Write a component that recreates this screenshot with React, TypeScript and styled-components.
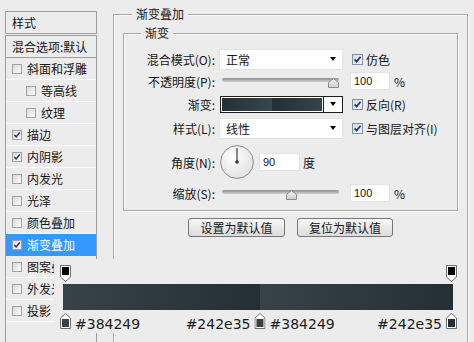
import React from "react";
import styled, { createGlobalStyle } from "styled-components";

const GlobalStyle = createGlobalStyle`
  html, body {
    margin: 0;
    padding: 0;
    overflow: hidden;
    background: #ececec;
  }
  body {
    font-family: "Noto Sans CJK SC", "Noto Sans", sans-serif;
    font-size: 12px;
    color: #161616;
  }
`;

const Window = styled.div`
  position: relative;
  width: 474px;
  height: 342px;
  overflow: hidden;
  display: flex;
  align-items: flex-start;
`;

/* ---------- style list on the left ---------- */

const Sidebar = styled.div`
  margin: 11px 0 0 5px;
  width: 92px;
  height: 345px;
  display: flex;
  flex-direction: column;
`;

const SideHeader = styled.div`
  height: 23px;
  box-sizing: border-box;
  border: 1px solid #9e9e9e;
  padding-left: 6px;
  line-height: 21px;
`;

const SideList = styled.div`
  margin-top: 1px;
  flex: 1;
  border: 1px solid #9e9e9e;
  display: flex;
  flex-direction: column;
`;

const BlendItem = styled.div`
  height: 22px;
  box-sizing: border-box;
  border-bottom: 1px solid #9e9e9e;
  padding-left: 6px;
  line-height: 21px;
  white-space: nowrap;
`;

const LayerItem = styled.div<{ $indent?: boolean; $active?: boolean }>`
  height: 22px;
  box-sizing: border-box;
  border-bottom: 1px solid ${(p) => (p.$active ? "#3399ff" : "#fbfbfb")};
  display: flex;
  align-items: center;
  gap: 5px;
  padding-left: ${(p) => (p.$indent ? 20 : 6)}px;
  background: ${(p) => (p.$active ? "#3399ff" : "transparent")};
  color: ${(p) => (p.$active ? "#fff" : "inherit")};
  white-space: nowrap;
  overflow: hidden;
`;

const Box = styled.span<{ $size: number; $blue?: boolean }>`
  flex: none;
  width: ${(p) => p.$size}px;
  height: ${(p) => p.$size}px;
  box-sizing: border-box;
  border: 1px solid ${(p) => (p.$blue ? "#7f91ab" : "#a2a2a2")};
  background: ${(p) =>
    p.$blue
      ? "linear-gradient(135deg, #d3dae5, #f7f8fa)"
      : "linear-gradient(135deg, #d9d9d9, #fbfbfb)"};
  display: flex;
  align-items: center;
  justify-content: center;

  svg {
    display: block;
  }
`;

const Check = ({ size, checked, blue }: { size: number; checked?: boolean; blue?: boolean }) => (
  <Box $size={size} $blue={blue}>
    {checked && (
      <svg width={size - 2} height={size - 2} viewBox="0 0 9 9">
        <path d="M1.6 4.4 L3.6 6.6 L7.6 1.8" fill="none" stroke="#22386a" strokeWidth="1.7" />
      </svg>
    )}
  </Box>
);

/* ---------- right panel ---------- */

const Main = styled.div`
  margin: 14px 0 0 16px;
  width: 355px;
  height: 360px;
  box-sizing: border-box;
  border: 1px solid #a8a8a8;
  box-shadow: inset 1px 1px 0 #fafafa, 1px 1px 0 #fafafa;
  padding: 0 9px;
  display: flex;
  flex-direction: column;
`;

const GroupTitle = styled.div<{ $indent: number }>`
  margin: -9px 0 0 ${(p) => p.$indent}px;
  padding: 0 4px;
  align-self: flex-start;
  background: #ececec;
  line-height: 16px;
`;

const Group = styled.div`
  margin-top: 11px;
  height: 178px;
  box-sizing: border-box;
  border: 1px solid #a8a8a8;
  box-shadow: inset 1px 1px 0 #fafafa, 1px 1px 0 #fafafa;
  display: flex;
  flex-direction: column;
`;

const Row = styled.div<{ $h: number; $mt?: number }>`
  display: flex;
  align-items: center;
  height: ${(p) => p.$h}px;
  margin-top: ${(p) => p.$mt ?? 0}px;
  white-space: nowrap;
`;

const Label = styled.div`
  width: 95px;
  box-sizing: border-box;
  padding-right: 4px;
  text-align: right;
`;

const Select = styled.div`
  width: 124px;
  height: 21px;
  box-sizing: border-box;
  background: #fff;
  border: 1px solid #e3e3e3;
  display: flex;
  align-items: center;
  justify-content: space-between;
  padding: 0 6px 0 6px;
`;

const Caret = styled.span`
  width: 0;
  height: 0;
  border-left: 3.5px solid transparent;
  border-right: 3.5px solid transparent;
  border-top: 4px solid #000;
`;

const CheckLabel = styled.div`
  margin-left: 9px;
  display: flex;
  align-items: center;
  gap: 3px;
`;

const SliderBox = styled.div`
  position: relative;
  width: 124px;
  height: 14px;
`;

const Track = styled.div`
  margin: 4px 0 0 3px;
  width: 117px;
  height: 4px;
  border-radius: 2px;
  background: linear-gradient(#8c8c8c, #d2d2d2);
`;

const Thumb = styled.svg<{ $pos: number }>`
  position: absolute;
  top: 4px;
  left: ${(p) => 3 + p.$pos * 111 - 5.5}px;
`;

const Slider = ({ pos }: { pos: number }) => (
  <SliderBox>
    <Track />
    <Thumb $pos={pos} width="11" height="10" viewBox="0 0 11 10">
      <defs>
        <linearGradient id="thumbFill" x1="0" y1="0" x2="0" y2="1">
          <stop offset="0" stopColor="#f6f6f6" />
          <stop offset="1" stopColor="#cdcdcd" />
        </linearGradient>
      </defs>
      <path d="M5.5 0.5 L10.5 4.5 V9.5 H0.5 V4.5 Z" fill="url(#thumbFill)" stroke="#8a8a8a" />
    </Thumb>
  </SliderBox>
);

const NumField = styled.div<{ $w: number; $ml: number }>`
  margin-left: ${(p) => p.$ml}px;
  width: ${(p) => p.$w}px;
  height: 18px;
  box-sizing: border-box;
  background: #fff;
  border: 1px solid #e3e3e3;
  padding-left: 3px;
  font-family: "Liberation Sans", Arial, sans-serif;
  font-size: 11px;
  line-height: 16px;
`;

const Unit = styled.span<{ $ml: number }>`
  margin-left: ${(p) => p.$ml}px;
`;

const GradientPicker = styled.div`
  margin-left: 1px;
  width: 123px;
  height: 17px;
  box-sizing: border-box;
  border: 1px solid #1e1e1e;
  background: #fff;
  display: flex;
`;

const GradientPreview = styled.div`
  flex: 1;
  margin: 1px;
  background: linear-gradient(90deg, #242e35 0%, #3a464d 50%, #242e35 50%, #384249 100%);
`;

const GradientButton = styled.div`
  width: 18px;
  border-left: 1px solid #1e1e1e;
  display: flex;
  align-items: center;
  justify-content: center;
`;

const Dial = ({ angle }: { angle: number }) => {
  const r = (angle * Math.PI) / 180;
  return (
    <DialSvg width="34" height="34" viewBox="0 0 34 34">
      <defs>
        <radialGradient id="dialFill" cx="40%" cy="35%" r="75%">
          <stop offset="0" stopColor="#ffffff" />
          <stop offset="1" stopColor="#dedede" />
        </radialGradient>
      </defs>
      <circle cx="17" cy="17" r="16.4" fill="url(#dialFill)" stroke="#8c8c8c" />
      <line
        x1="17"
        y1="17"
        x2={17 + 14 * Math.cos(r)}
        y2={17 - 14 * Math.sin(r)}
        stroke="#595959"
        strokeWidth="1.4"
      />
      <circle cx="17" cy="17" r="1.8" fill="#333" />
    </DialSvg>
  );
};

const DialSvg = styled.svg`
  margin-left: 1px;
  display: block;
`;

const ButtonRow = styled.div`
  margin-top: 7px;
  display: flex;
  justify-content: center;
  gap: 12px;
`;

const Button = styled.div<{ $w: number }>`
  width: ${(p) => p.$w}px;
  height: 19px;
  box-sizing: border-box;
  border: 1px solid #777;
  border-radius: 3px;
  background: linear-gradient(#f7f7f7, #dcdcdc);
  display: flex;
  align-items: center;
  justify-content: center;
  line-height: 1;
`;

/* ---------- gradient stops annotation laid over the dialog ---------- */

const Annotation = styled.div`
  position: absolute;
  left: 54px;
  top: 259px;
  width: 408px;
  height: 74px;
  box-sizing: border-box;
  padding: 6px 0 0 6px;
  background: #ececec;
  display: flex;
  flex-direction: column;
`;

const StopRow = styled.div<{ $h: number; $mt: number }>`
  position: relative;
  width: 397px;
  height: ${(p) => p.$h}px;
  margin-top: ${(p) => p.$mt}px;
`;

const GradientBar = styled.div`
  margin: 2px 0 0 3px;
  width: 390px;
  height: 26px;
  background: linear-gradient(90deg, #384249 0%, #242e35 50.6%, #384249 50.6%, #242e35 100%);
`;

const Stop = styled.div<{ $pos: number }>`
  position: absolute;
  top: 0;
  left: ${(p) => p.$pos}%;
  transform: translateX(-${(p) => p.$pos}%);
  width: 11px;
  height: 100%;

  svg {
    display: block;
  }
`;

const Hex = styled.span<{ $side: "left" | "right" }>`
  position: absolute;
  top: 3px;
  ${(p) => (p.$side === "right" ? "left: calc(100% + 4px);" : "right: calc(100% + 4px);")}
  font-family: "DejaVu Sans", sans-serif;
  font-size: 14px;
  line-height: 16px;
  color: #1c1c1c;
  white-space: nowrap;
`;

const OpacityStop = ({ pos }: { pos: number }) => (
  <Stop $pos={pos}>
    <svg width="11" height="17" viewBox="0 0 11 17">
      <path d="M0.5 0.5 H10.5 V12 L5.5 16.5 L0.5 12 Z" fill="#fff" stroke="#6d6d6d" />
      <rect x="2" y="2" width="7" height="8" fill="#000" />
    </svg>
  </Stop>
);

const ColorStop = ({ pos, color, before, after }: { pos: number; color: string; before?: string; after?: string }) => (
  <Stop $pos={pos}>
    <svg width="11" height="16" viewBox="0 0 11 16">
      <path d="M5.5 0.5 L10.5 5 V15.5 H0.5 V5 Z" fill="#fff" stroke="#6d6d6d" />
      <rect x="2" y="6" width="7" height="8" fill={color} />
    </svg>
    {before && <Hex $side="left">{before}</Hex>}
    {after && <Hex $side="right">{after}</Hex>}
  </Stop>
);

const layers = [
  { name: "斜面和浮雕" },
  { name: "等高线", indent: true },
  { name: "纹理", indent: true },
  { name: "描边", checked: true },
  { name: "内阴影", checked: true },
  { name: "内发光" },
  { name: "光泽" },
  { name: "颜色叠加" },
  { name: "渐变叠加", checked: true, active: true },
  { name: "图案叠加" },
  { name: "外发光" },
  { name: "投影" },
];

export default function App() {
  return (
    <>
      <GlobalStyle />
      <Window>
        <Sidebar>
          <SideHeader>样式</SideHeader>
          <SideList>
            <BlendItem>混合选项:默认</BlendItem>
            {layers.map((l) => (
              <LayerItem key={l.name} $indent={l.indent} $active={l.active}>
                <Check size={10} checked={l.checked} />
                {l.name}
              </LayerItem>
            ))}
          </SideList>
        </Sidebar>

        <Main>
          <GroupTitle $indent={9}>渐变叠加</GroupTitle>
          <Group>
            <GroupTitle $indent={17}>渐变</GroupTitle>
            <Row $h={22} $mt={7}>
              <Label>混合模式(O):</Label>
              <Select>
                <span>正常</span>
                <Caret />
              </Select>
              <CheckLabel>
                <Check size={11} checked blue />
                仿色
              </CheckLabel>
            </Row>
            <Row $h={22}>
              <Label>不透明度(P):</Label>
              <Slider pos={1} />
              <NumField $w={40} $ml={7}>100</NumField>
              <Unit $ml={4}>%</Unit>
            </Row>
            <Row $h={24}>
              <Label>渐变:</Label>
              <GradientPicker>
                <GradientPreview />
                <GradientButton>
                  <Caret />
                </GradientButton>
              </GradientPicker>
              <CheckLabel>
                <Check size={11} checked blue />
                反向(R)
              </CheckLabel>
            </Row>
            <Row $h={24}>
              <Label>样式(L):</Label>
              <Select>
                <span>线性</span>
                <Caret />
              </Select>
              <CheckLabel>
                <Check size={11} checked blue />
                与图层对齐(I)
              </CheckLabel>
            </Row>
            <Row $h={44}>
              <Label>角度(N):</Label>
              <Dial angle={90} />
              <NumField $w={41} $ml={5}>90</NumField>
              <Unit $ml={3}>度</Unit>
            </Row>
            <Row $h={18}>
              <Label>缩放(S):</Label>
              <Slider pos={0.63} />
              <NumField $w={40} $ml={7}>100</NumField>
              <Unit $ml={4}>%</Unit>
            </Row>
          </Group>
          <ButtonRow>
            <Button $w={97}>设置为默认值</Button>
            <Button $w={96}>复位为默认值</Button>
          </ButtonRow>
        </Main>

        <Annotation>
          <StopRow $h={17} $mt={0}>
            <OpacityStop pos={0} />
            <OpacityStop pos={100} />
          </StopRow>
          <GradientBar />
          <StopRow $h={16} $mt={3}>
            <ColorStop pos={0} color="#384249" after="#384249" />
            <ColorStop pos={50.4} color="#3a3f44" before="#242e35" after="#384249" />
            <ColorStop pos={100} color="#242e35" before="#242e35" />
          </StopRow>
        </Annotation>
      </Window>
    </>
  );
}
